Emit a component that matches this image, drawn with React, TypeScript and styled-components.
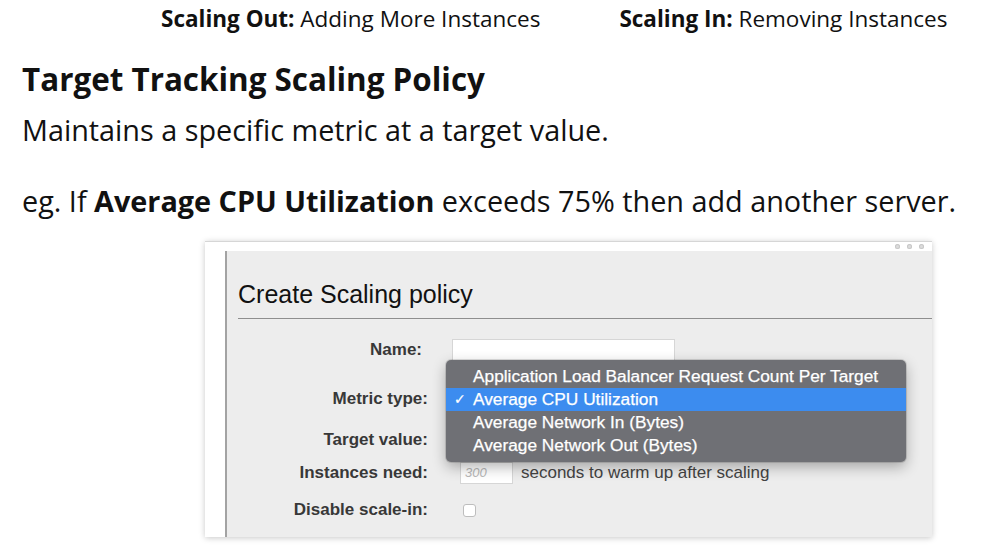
import React from "react";
import styled, { createGlobalStyle } from "styled-components";

const Global = createGlobalStyle`
  html, body { margin: 0; padding: 0; background: #fff; }
  body { width: 995px; height: 549px; overflow: hidden; }
`;

const Slide = styled.div`
  font-family: "Open Sans", Lato, sans-serif;
  color: #111;
  width: 995px;
  height: 549px;
  display: flex;
  flex-direction: column;
`;

const TopRow = styled.div`
  display: flex;
  gap: 79px;
  padding-left: 161px;
  height: 36px;
  align-items: center;
  font-size: 22.5px;
`;

const Topic = styled.span`
  white-space: nowrap;
  b { font-weight: 700; }
`;

const Title = styled.h1`
  margin: 25px 0 0 22px;
  font-size: 31.4px;
  line-height: 36px;
  font-weight: 700;
  white-space: nowrap;
`;

const Para = styled.p<{ $mt: number }>`
  margin: ${(p) => p.$mt}px 0 0 22px;
  font-size: 28.8px;
  line-height: 34px;
  white-space: nowrap;
  b { font-weight: 700; }
`;

const Window = styled.div`
  margin: 23px 0 0 205px;
  width: 727px;
  background: #fff;
  border-top: 1px solid #d6d6d6;
  box-shadow: 0 1px 6px rgba(0, 0, 0, 0.22);
  display: flex;
  flex-direction: column;
`;

const TitleBar = styled.div`
  height: 9px;
  display: flex;
  justify-content: flex-end;
  align-items: center;
  gap: 7px;
  padding-right: 8px;
`;

const Dot = styled.span`
  width: 5px;
  height: 5px;
  border-radius: 50%;
  background: #dcdcdc;
  box-shadow: inset 0 0 0 1px #c8c8c8;
`;

const Body = styled.div`
  display: flex;
  padding-left: 20px;
`;

const Panel = styled.div`
  position: relative;
  flex: 1;
  height: 286px;
  background: #ededed;
  border-left: 2px solid #a3a3a3;
  font-family: "Liberation Sans", Arial, sans-serif;
  display: flex;
  flex-direction: column;
`;

const Header = styled.div`
  margin-left: 11px;
  height: 68px;
  border-bottom: 1px solid #8e8e8e;
  display: flex;
  align-items: flex-end;
  padding-bottom: 9px;
  box-sizing: border-box;
`;

const PanelTitle = styled.div`
  font-size: 25px;
  line-height: 30px;
  color: #111;
`;

const Form = styled.div`
  display: flex;
  flex-direction: column;
  padding-left: 11px;
`;

const Row = styled.div<{ $mt: number }>`
  display: flex;
  align-items: center;
  height: 24px;
  margin-top: ${(p) => p.$mt}px;
  gap: 24px;
`;

const Label = styled.div<{ $pr?: number }>`
  width: 190px;
  box-sizing: border-box;
  padding-right: ${(p) => p.$pr ?? 0}px;
  text-align: right;
  font-size: 17px;
  font-weight: 700;
  color: #383838;
`;

const Field = styled.div<{ $ml?: number }>`
  display: flex;
  align-items: center;
  gap: 8px;
  margin-left: ${(p) => p.$ml ?? 0}px;
`;

const TextBox = styled.div<{ $w: number }>`
  width: ${(p) => p.$w}px;
  height: 22px;
  box-sizing: border-box;
  background: #fff;
  border: 1px solid #d6d6d6;
  font-size: 13px;
  font-style: italic;
  color: #b8b8b8;
  padding-left: 4px;
  line-height: 20px;
`;

const Hint = styled.span`
  font-size: 17px;
  color: #444;
`;

const Check = styled.span`
  width: 13px;
  height: 13px;
  box-sizing: border-box;
  border: 1px solid #bdbdbd;
  border-radius: 3px;
  background: #fff;
`;

const Menu = styled.div`
  position: absolute;
  left: 219px;
  top: 109px;
  width: 460px;
  box-sizing: border-box;
  padding: 5px 0 5px;
  background: #6f7075;
  border-radius: 5px;
  box-shadow: 0 5px 14px rgba(0, 0, 0, 0.3), 0 0 0 1px rgba(0, 0, 0, 0.12);
`;

const Item = styled.div<{ $sel?: boolean }>`
  position: relative;
  height: 23px;
  line-height: 23px;
  padding-left: 27px;
  font-size: 17.3px;
  color: #fff;
  -webkit-text-stroke: 0.25px #fff;
  background: ${(p) => (p.$sel ? "#3c8cef" : "transparent")};
  white-space: nowrap;
`;

const Tick = styled.span`
  position: absolute;
  left: 8px;
  top: 0;
  font-family: "DejaVu Sans", sans-serif;
  font-size: 14px;
`;

const items = [
  "Application Load Balancer Request Count Per Target",
  "Average CPU Utilization",
  "Average Network In (Bytes)",
  "Average Network Out (Bytes)",
];

export default function App() {
  return (
    <>
      <Global />
      <Slide>
        <TopRow>
          <Topic>
            <b>Scaling Out:</b> Adding More Instances
          </Topic>
          <Topic>
            <b>Scaling In:</b> Removing Instances
          </Topic>
        </TopRow>
        <Title>Target Tracking Scaling Policy</Title>
        <Para $mt={16}>Maintains a specific metric at a target value.</Para>
        <Para $mt={37}>
          eg. If <b>Average CPU Utilization</b> exceeds 75% then add another server.
        </Para>
        <Window>
          <TitleBar>
            <Dot />
            <Dot />
            <Dot />
          </TitleBar>
          <Body>
            <Panel>
              <Header>
                <PanelTitle>Create Scaling policy</PanelTitle>
              </Header>
              <Form>
                <Row $mt={19}>
                  <Label $pr={6}>Name:</Label>
                  <Field>
                    <TextBox $w={223} />
                  </Field>
                </Row>
                <Row $mt={25}>
                  <Label>Metric type:</Label>
                  <Field>
                    <TextBox $w={223} />
                  </Field>
                </Row>
                <Row $mt={17}>
                  <Label>Target value:</Label>
                  <Field>
                    <TextBox $w={60} />
                  </Field>
                </Row>
                <Row $mt={9}>
                  <Label>Instances need:</Label>
                  <Field $ml={8}>
                    <TextBox $w={53}>300</TextBox>
                    <Hint>seconds to warm up after scaling</Hint>
                  </Field>
                </Row>
                <Row $mt={13}>
                  <Label>Disable scale-in:</Label>
                  <Field $ml={11}>
                    <Check />
                  </Field>
                </Row>
              </Form>
              <Menu>
                {items.map((t, i) => (
                  <Item key={t} $sel={i === 1}>
                    {i === 1 && <Tick>✓</Tick>}
                    {t}
                  </Item>
                ))}
              </Menu>
            </Panel>
          </Body>
        </Window>
      </Slide>
    </>
  );
}
